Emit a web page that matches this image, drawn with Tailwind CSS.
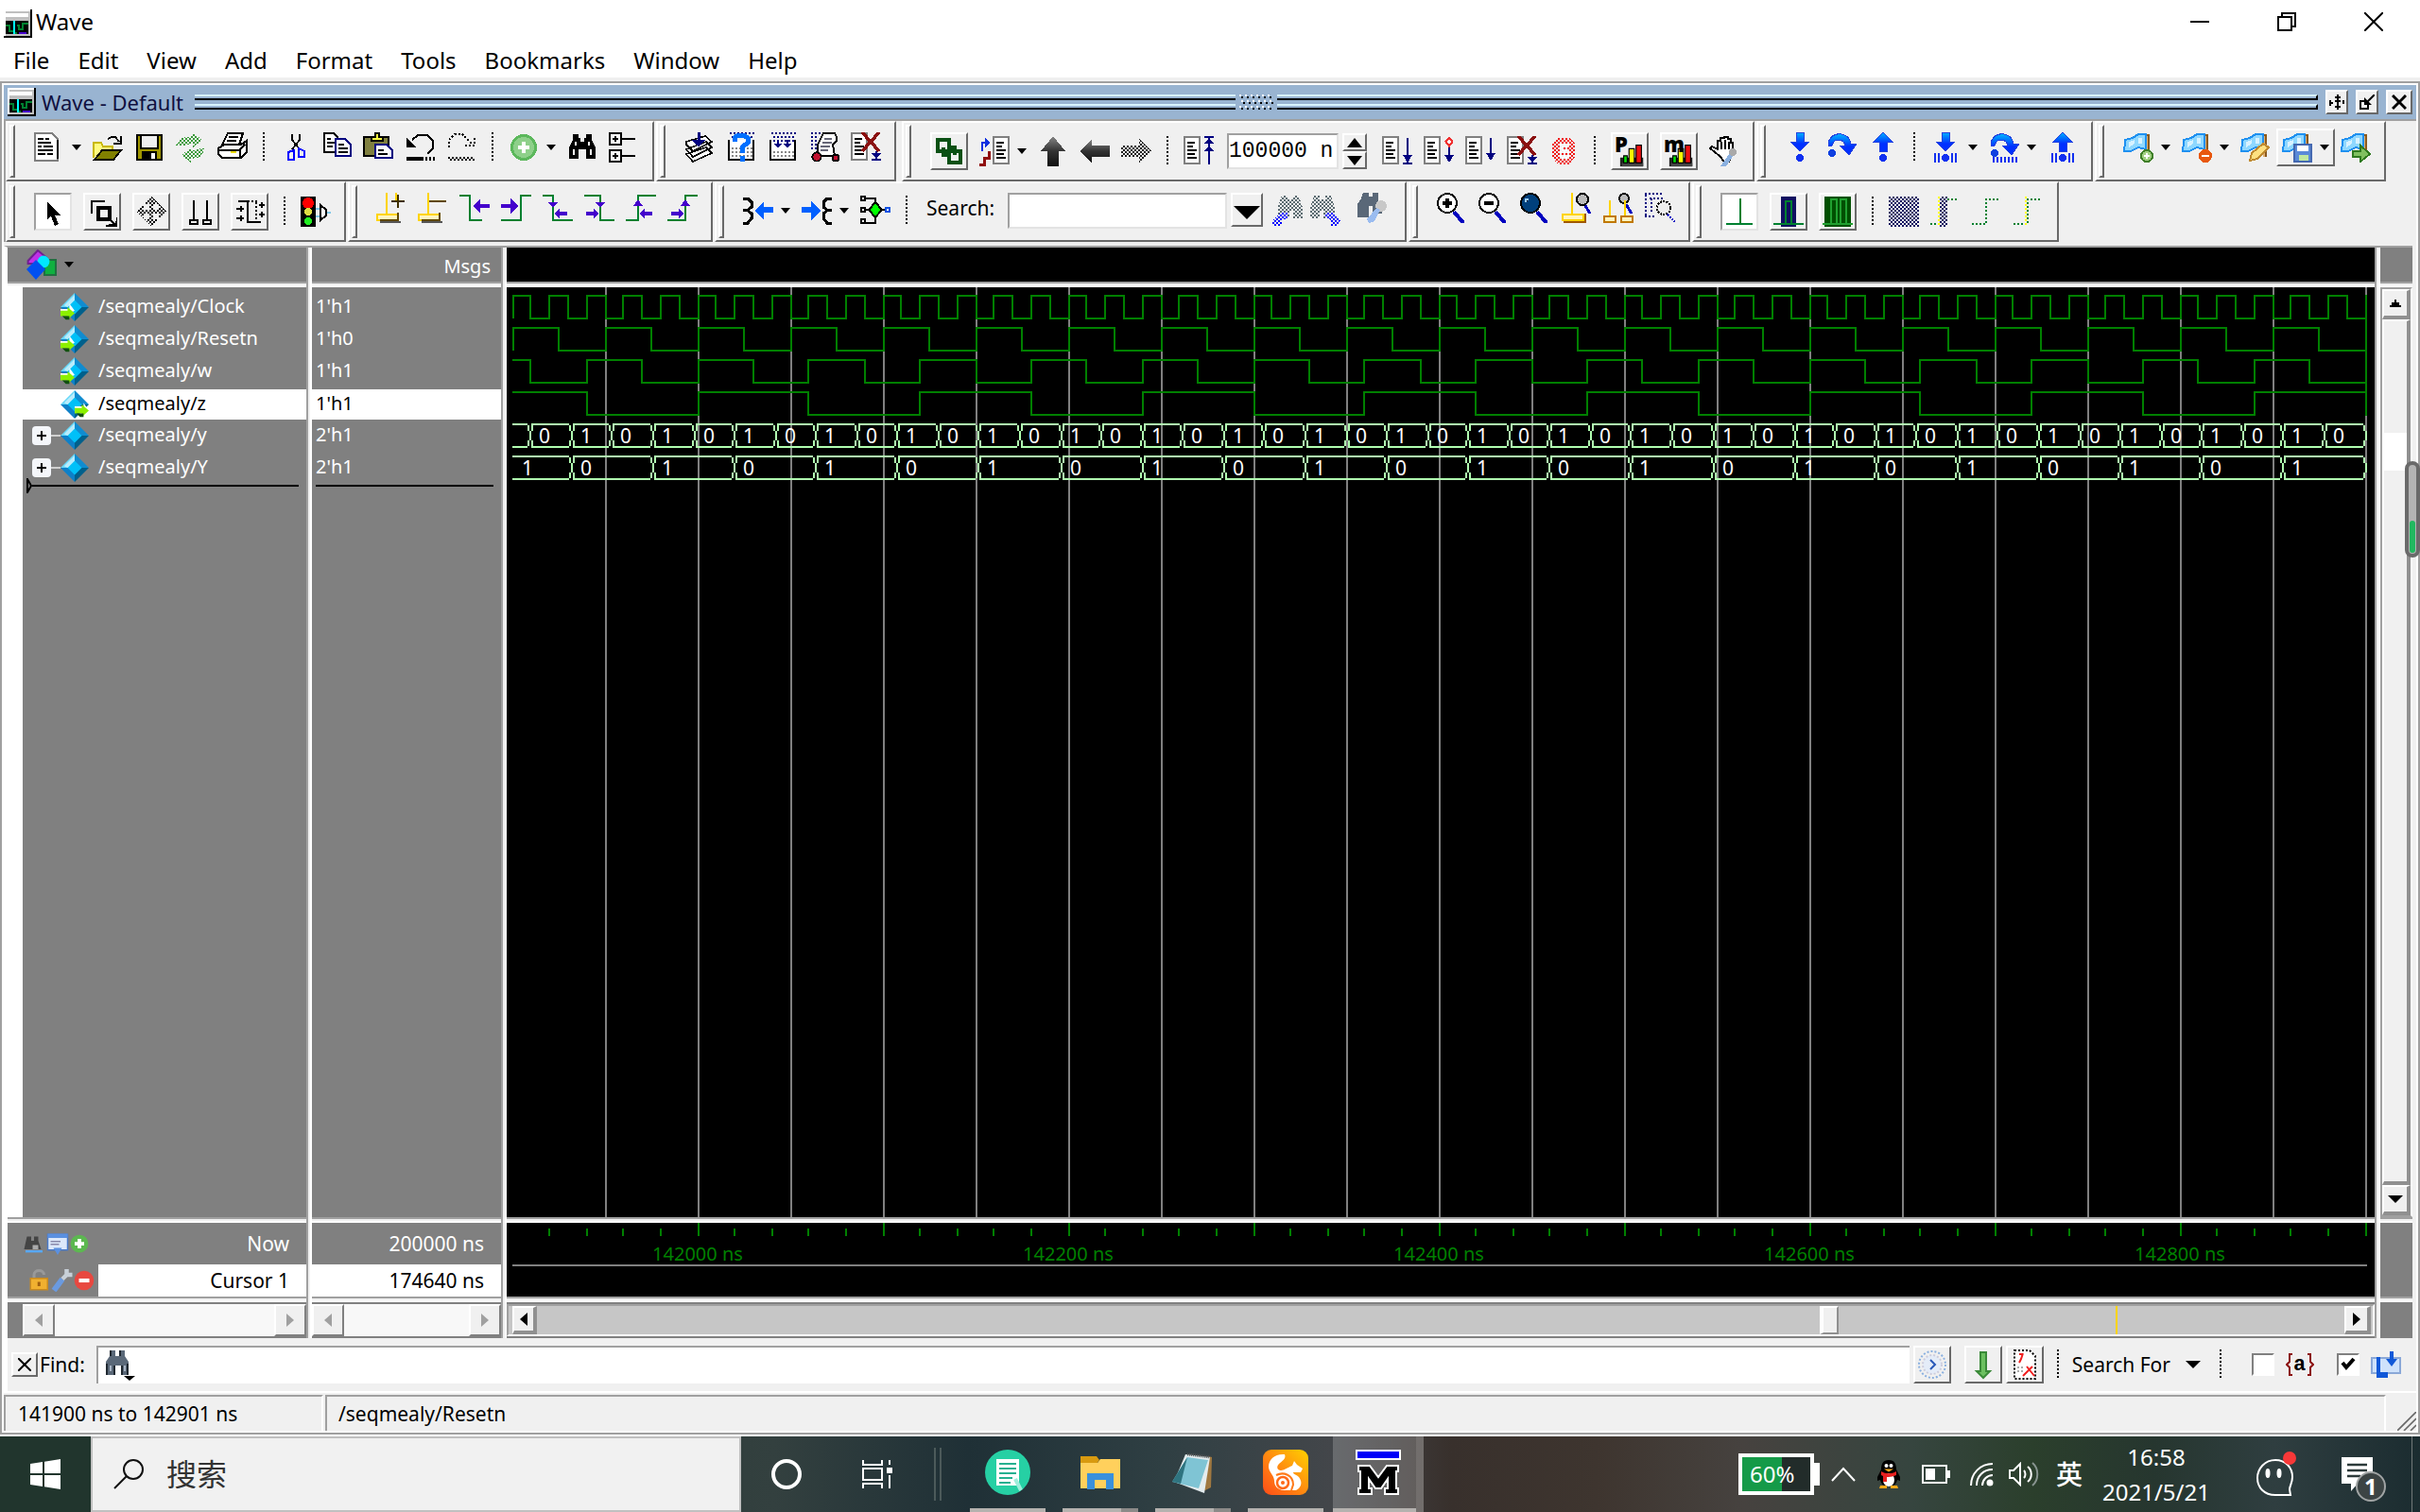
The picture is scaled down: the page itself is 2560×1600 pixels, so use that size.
<!DOCTYPE html>
<html lang="en">
<head>
<meta charset="utf-8">
<title>Wave</title>
<script src="https://cdn.jsdelivr.net/npm/@tailwindcss/browser@4"></script>
</head>
<body class="flex h-screen flex-col overflow-hidden bg-white font-['Noto_Sans','Noto_Sans_CJK_SC',sans-serif] text-[21px] leading-7 text-black">

<svg class="absolute size-0" aria-hidden="true">
  <defs>
    <pattern id="chk" width="2" height="2" patternUnits="userSpaceOnUse"><path fill="#fff" d="M0 0h1v1H0zM1 1h1v1H1z"/></pattern>
    <mask id="dim" maskUnits="userSpaceOnUse" x="0" y="0" width="16" height="16"><rect width="16" height="16" fill="url(#chk)"/></mask>
    <linearGradient id="dark" x2="0" y2="1"><stop stop-color="#888"/><stop offset=".5" stop-color="#333"/><stop offset="1" stop-color="#111"/></linearGradient>
    <linearGradient id="blue" x2="0" y2="1"><stop stop-color="#00b4ff"/><stop offset=".6" stop-color="#0030ff"/></linearGradient>
    <g id="page"><path fill="#fff" stroke="#808080" d="M.5.5h8v14h-8z"/><path stroke="#000" d="M2 3.500h4M2 5.500h3M2 7.500h5M2 9.500h4M2 11.500h5"/></g>
    <g id="flag"><path stroke="#8a5a20" stroke-width="2" d="M13 1v12"/><path stroke="#e0b070" d="M12.500 2v11"/><path fill="#8fd8ff" stroke="#1e90f0" d="M1 4l4-1 3-2h4v8l-4-1-4 2H.6z"/><path fill="#d8f2ff" d="M3 5l3-1v2L3 8zM8 3h2v3H8z"/></g>
    <g id="lens"><circle cx="5.500" cy="5.500" r="5" fill="#fff" stroke="#000"/><path stroke="#0000c0" stroke-width="2" d="M9 10l5 6"/></g>
    <g id="binoc"><path d="M3 1h3v2h1v2h2V3h1V1h3v3l2 4v6h-5V9H6v5H1V8l2-4z"/></g>
  </defs>
  <symbol id="i-app" viewBox="0 0 15 15"><path fill="#c0c0c0" d="M0 0h15v15H0z"/><path fill="#fff" d="M0 0h14v1H0zM0 0h1v14H0zM1 2h12v2H1z"/><path fill="#000" d="M1 6h12v7H1zM14 0h1v15H0v-1h14z"/><path fill="none" stroke="#008030" d="M1 8.500h2v3h2M7 8.500h1v2h2v-3h3M6 12.500h1"/><path stroke="#0ff" d="M5.500 6v7"/><path stroke="#40c" d="M8 12.500h4"/></symbol>
  <symbol id="i-new" viewBox="0 0 16 16"><path fill="#fff" stroke="#808080" d="M.5.5h9l3 3v11.500h-12z"/><path stroke="#000" d="M2 3.500h3M6 3.500h2M2 5.500h7M2 7.500h2M5 7.500h5M2 9.500h8M2 11.500h4M7 11.500h3M12.500 4v10"/></symbol>
  <symbol id="i-open" viewBox="0 0 16 16"><path fill="#fffb80" stroke="#c8b800" d="M.5 13.500v-8h4l1 2h5v2"/><path fill="#808000" stroke="#000" d="M1 14.500l4-5h10l-4 5z"/><path fill="none" stroke="#000" d="M8 3.500l2-1h2l2 2.500M15 2v4h-4"/></symbol>
  <symbol id="i-save" viewBox="0 0 16 16"><path fill="#a09600" stroke="#000" d="M1.500 1.500h13v13h-13z"/><path fill="#efefef" stroke="#000" d="M3.500 1.500h9v7h-9z"/><path fill="#000" d="M4 10h8v4H4z"/><path fill="#fff" d="M9 11h2v3h-2z"/></symbol>
  <symbol id="i-refresh" viewBox="0 0 16 16"><g mask="url(#dim)" fill="#3a9a3a"><path d="M0 7l3-4 6-1V0l5 4-5 4V6L5 7zM16 8l-3 5-5 1v2l-5-4 5-4v2l3-1z"/></g></symbol>
  <symbol id="i-print" viewBox="0 0 16 16"><path fill="#fff" stroke="#000" d="M5.500.5h8l-2 6h-9zM.5 8.500l3-2h9l3-2v6l-3 3h-10l-2-2z"/><path fill="none" stroke="#000" d="M6 2.500h5M5 4.500h5M.5 9.500h11l3-3M12 9v4"/><path stroke="#e8d800" d="M7 10.500h3"/></symbol>
  <symbol id="i-cut" viewBox="0 0 16 16"><path fill="none" stroke="#000" d="M6.500 1v3l4 5M10.500 1v3l-4 5"/><path fill="none" stroke="#00f" d="M7.500 9.500l-3 1v4h3zM10 8.500v4.500h3v-3l-2-1z"/></symbol>
  <symbol id="i-copy" viewBox="0 0 16 16"><path fill="#fff" stroke="#000" d="M1.500.5h5l2 2v8h-7z"/><path fill="#fff" stroke="#000080" d="M7.500 3.500h5l3 3v6h-8z"/><path stroke="#000" d="M3 3.500h2M3 5.500h4M3 7.500h3M9 6.500h3M9 8.500h5M9 10.500h5"/></symbol>
  <symbol id="i-paste" viewBox="0 0 16 16"><path fill="#808040" stroke="#000" d="M.5 2.500h13v10H.5z"/><path fill="#ffff40" stroke="#000" d="M4.500 4.500v-2h2v-2h2v2h2v2z"/><path fill="#fff" stroke="#000080" d="M6.500 6.500h6l3 3v4h-9z"/><path stroke="#000" d="M8 9.500h3M8 11.500h5"/></symbol>
  <symbol id="i-undo" viewBox="0 0 16 16"><path fill="none" stroke="#000" d="M4 4l3-2.500h5l3 3v4l-3 3"/><path d="M1 3v5h5zM1 13h9v2H1zM11 13h1v2h-1zM13 13h1v2h-1zM15 13h1v2h-1z"/></symbol>
  <symbol id="i-redo" viewBox="0 0 16 16"><g fill="none" stroke="#000" stroke-dasharray="1 1"><path d="M1.500 8V4l3-3h4l5 5M15 3v4h-5M1 13.500h14M2 14.500h14"/></g></symbol>
  <symbol id="i-add" viewBox="0 0 16 16"><circle cx="8" cy="8" r="7" fill="#5cb85c"/><circle cx="8" cy="8" r="5.500" fill="#8ed08a"/><path fill="#fff" d="M7 5h2v2h2v2H9v2H7V9H5V7h2z"/></symbol>
  <symbol id="i-find" viewBox="0 0 16 16"><use href="#binoc"/><path stroke="#fff" d="M4.500 5v2M11.500 5v2M3.500 9v3M12.500 9v3"/></symbol>
  <symbol id="i-tree" viewBox="0 0 16 16"><path fill="#fff" stroke="#000" d="M.5.5h6v6h-6zM.5 9.500h6v6h-6z"/><path stroke="#000" d="M2 3.500h3M3.500 2v3M2 12.500h3M3.500 11v3M7 3.500h7M7 12.500h7"/></symbol>
  <symbol id="i-stack" viewBox="0 0 16 16"><path fill="#fff" stroke="#000" stroke-width=".8" d="M1 11.500l3.500 4 10-4.500-3-3zM1 9l3.500 4 10-5-3-3zM1 6.500L4.500 10l10-5L11 2 1 5z"/><path stroke="#000080" stroke-width="1.500" d="M7.500 0v6"/><path fill="#000080" d="M4 4h7L7.500 8z"/></symbol>
  <symbol id="i-help" viewBox="0 0 16 16"><path fill="#fff" stroke="#000" d="M1.500 4v10.500h13V4"/><path stroke="#000080" stroke-dasharray="1 1" d="M2 .5h13M3 2.500h12"/><path stroke="#888" stroke-dasharray="1 1" d="M3 8.500h11M3 10.500h11M3 12.500h11"/><path fill="none" stroke="#0070ff" stroke-width="2.500" d="M4.500 5V3l2-1.500h3L11.500 3v2.500L8.500 8v3M8.500 12.500v3"/></symbol>
  <symbol id="i-comp" viewBox="0 0 16 16"><path fill="#fff" stroke="#000" d="M1.500 4v10.500h13V4"/><path stroke="#000080" stroke-dasharray="1 1" d="M2 .5h13M3 2.500h12M3 4.500h12"/><path stroke="#888" stroke-dasharray="1 1" d="M3 10.500h11M3 12.500h11"/><path fill="#000080" d="M5 4h1v2h1.500L5.500 8.500 3.500 6H5zM10 4h1v2h1.500l-2 2.500-2-2.500H10z"/></symbol>
  <symbol id="i-sim" viewBox="0 0 16 16"><path stroke="#000080" stroke-dasharray="1 1" d="M1 .5h5M1 2.500h4M1 4.500h4M1 6.500h4M1 8.500h3"/><path fill="#fff" stroke="#000" d="M4.500 12.500v-6l3-6h6l1 2v2l-2 2 1 6z"/><path stroke="#667" d="M8 3.500h4M7 5.500h5M6 7.500h5M6 9.500h4"/><circle cx="4" cy="13" r="2.300" fill="#c01030" stroke="#000"/><circle cx="14" cy="13.500" r="1.700" fill="#c01030" stroke="#000"/></symbol>
  <symbol id="i-docx" viewBox="0 0 16 16"><use href="#page"/><path stroke="#8b1010" stroke-width="1.800" d="M6 0l9 10M15 0L6 10"/><path stroke="#000080" d="M13.500 10v4M11 14.500h5"/><path fill="#000080" d="M11 11h5l-2.500 3z"/></symbol>
  <symbol id="i-link" viewBox="0 0 16 16"><path fill="none" stroke="#0a5014" stroke-width="2" d="M2 2h6v6H2zM8 8h6v6H8zM5 6v4h4M11 10V6H8"/></symbol>
  <symbol id="i-goto" viewBox="0 0 16 16"><path fill="none" stroke="#1030e0" d="M1.500 8V3.500h3"/><path fill="#1030e0" d="M3 1l3 2.500L3 6z"/><path fill="none" stroke="#901010" stroke-width="1.500" d="M0 15h2.500v-3.500H5V8"/><use href="#page" x="7"/></symbol>
  <symbol id="i-up" viewBox="0 0 16 16"><path fill="url(#dark)" d="M8 0l6.500 8H11v8H5V8H1.500z"/></symbol>
  <symbol id="i-left" viewBox="0 0 16 16"><path fill="url(#dark)" d="M0 8l6.500-6.500V5H16v6H6.500v3.500z"/></symbol>
  <symbol id="i-right" viewBox="0 0 16 16"><path mask="url(#dim)" fill="#222" d="M16 8L9.500 1.500V5H0v6h9.500v3.500z"/></symbol>
  <symbol id="i-doc-up" viewBox="0 0 16 16"><use href="#page"/><path stroke="#000080" d="M13.500 1v14M11 .5h5"/><path fill="#000080" d="M11 4l2.500-3L16 4zM11 8l2.500-3L16 8z"/></symbol>
  <symbol id="i-doc-dn" viewBox="0 0 16 16"><use href="#page"/><path stroke="#000080" d="M13.500 1v13M11 14.500h5"/><path fill="#000080" d="M11 10h5l-2.500 4z"/></symbol>
  <symbol id="i-doc-dia" viewBox="0 0 16 16"><use href="#page"/><path stroke="#000080" d="M13.500 6v7"/><path fill="#000080" d="M11 10h5l-2.500 4z"/><path fill="#fff" stroke="#f03030" d="M13.500.8L15.300 3l-1.800 2.300L11.700 3z"/></symbol>
  <symbol id="i-doc-dn2" viewBox="0 0 16 16"><use href="#page"/><path stroke="#000080" d="M13.500 1v9"/><path fill="#000080" d="M11 9h5l-2.500 4z"/></symbol>
  <symbol id="i-stop" viewBox="0 0 16 16"><g mask="url(#dim)"><path fill="#f01818" d="M5 1h6l3 3v7l-3 4H5l-3-4V4z"/><path fill="#fff" d="M6 4h5v2H7v1h4v2H7v1h4v2H6z"/></g></symbol>
  <symbol id="i-prof" viewBox="0 0 16 16"><path fill="#222" d="M1 10h13v5H1z"/><path fill="#444" d="M2 13h12v2H2z"/><path fill="#00e000" stroke="#000" stroke-width=".6" d="M3 9h2v4H3z"/><path fill="#ff0" stroke="#000" stroke-width=".6" d="M6 5h3v8H6z"/><path fill="#f01010" stroke="#000" stroke-width=".6" d="M10 3h3v10h-3z"/></symbol>
  <symbol id="i-hand" viewBox="0 0 16 16"><path fill="#fff" stroke="#000" d="M5.500 10.500l-5-4 1-1 3 1.500V2.500H6V1h2V.5h2v1h1.500v2h1v6l-2 4H8z"/><path stroke="#000" d="M6.500 3v4M8.500 2v5M10.500 3v4"/><path fill="#8ab0e0" d="M6 16l5-7 2 1-4 6z"/><circle cx="12.500" cy="8.500" r="2" fill="#aaa"/></symbol>
  <symbol id="i-into" viewBox="0 0 16 16"><path fill="url(#blue)" stroke="#2040e0" stroke-width=".5" d="M6 0h4v5h3l-5 5-5-5h3z"/><circle cx="8" cy="13.500" r="2" fill="#1030f0"/></symbol>
  <symbol id="i-over" viewBox="0 0 16 16"><path fill="url(#blue)" stroke="#2040e0" stroke-width=".5" d="M1 7c0-8 11-8 12-1h3l-4 6-5-5h3C9 3 4 3 3 7z"/><circle cx="3" cy="11" r="2" fill="#1040e0"/></symbol>
  <symbol id="i-out" viewBox="0 0 16 16"><path fill="url(#blue)" stroke="#2040e0" stroke-width=".5" d="M8 0l5 5h-3v5H6V5H3z"/><circle cx="8" cy="13.500" r="2" fill="#1030f0"/></symbol>
  <symbol id="i-into2" viewBox="0 0 16 16"><use href="#i-into"/><path stroke="#1030f0" d="M2.500 11v5M4.500 11v5M11.500 11v5M13.500 11v5"/></symbol>
  <symbol id="i-over2" viewBox="0 0 16 16"><use href="#i-over"/><path stroke="#1030f0" stroke-width="3" stroke-dasharray="1 1" d="M2 14.500h14"/></symbol>
  <symbol id="i-out2" viewBox="0 0 16 16"><use href="#i-out"/><path stroke="#1030f0" d="M2.500 11v5M4.500 11v5M11.500 11v5M13.500 11v5"/></symbol>
  <symbol id="i-bm-add" viewBox="0 0 16 16"><use href="#flag"/><circle cx="12.500" cy="12.500" r="3" fill="#a0d080" stroke="#40802a"/><path stroke="#fff" d="M11 12.500h3M12.500 11v3"/></symbol>
  <symbol id="i-bm-del" viewBox="0 0 16 16"><use href="#flag"/><circle cx="12.500" cy="12.500" r="3.500" fill="#e85810"/><path stroke="#fff" d="M10.500 12.500h4"/></symbol>
  <symbol id="i-bm-edit" viewBox="0 0 16 16"><use href="#flag"/><path fill="#ffe080" stroke="#c08a30" d="M5 15l1-4 6-5 3 2-6 6z"/></symbol>
  <symbol id="i-bm-save" viewBox="0 0 16 16"><use href="#flag"/><path fill="#5a8ad8" stroke="#4468b0" d="M6.500 6.500h9v9h-9z"/><path fill="#fff" d="M8 7h6v3H8z"/><path fill="#c0e8a0" d="M9 12h5v3H9z"/></symbol>
  <symbol id="i-bm-go" viewBox="0 0 16 16"><use href="#flag"/><path fill="#80c060" stroke="#307a20" d="M6.500 10h4V7l5 4.500-5 4v-2.500h-4z"/></symbol>
  <symbol id="i-arrow" viewBox="0 0 16 16"><path d="M5 3v9l2-1.500 2 5 2-1-2-4.500h3z"/></symbol>
  <symbol id="i-zoomsel" viewBox="0 0 16 16"><path fill="none" stroke="#000" d="M2.500 9V2.500h7"/><path fill="none" stroke="#000" stroke-width="2" d="M6 6h6v6H6z"/><path stroke="#000" d="M12 12l3 3"/><path d="M16 10v6h-6v-1l5-1z"/></symbol>
  <symbol id="i-pan" viewBox="0 0 16 16"><g mask="url(#dim)"><path d="M8 0l4 4H9v3h3V4l4 4-4 4V9H9v3h3l-4 4-4-4h3V9H4v3L0 8l4-4v3h3V4H4z"/></g></symbol>
  <symbol id="i-two" viewBox="0 0 16 16"><path fill="none" stroke="#000" d="M4.500 2v10M11.500 2v10M2.500 12.500h4v2h-4zM9.500 12.500h4v2h-4z"/></symbol>
  <symbol id="i-edit" viewBox="0 0 16 16"><path fill="none" stroke="#000" d="M2 2.500h5v11h7"/><path fill="none" stroke="#000" stroke-dasharray="1 1" d="M7 2.500h5M11.500 3v10"/><path stroke="#000" d="M1 6.500h4M1 11.500h4M3.500 5v3M3.500 10v3M13 4.500h3M13 9.500h3M14.500 3v3M14.500 8v3"/></symbol>
  <symbol id="i-light" viewBox="0 0 16 16"><path d="M0 0h8v16H0z"/><circle cx="4" cy="3.500" r="3" fill="#f00"/><circle cx="4" cy="8" r="2" fill="#dd4"/><circle cx="4" cy="13" r="2" fill="#2e2"/><path stroke="#80c8e8" d="M8 6.500h3M8 10.500h3M14 8.500h2"/><path fill="#fff" stroke="#000" d="M10.500 4.500l3 2.500v3l-3 2.500z"/></symbol>
  <symbol id="i-cur-add" viewBox="0 0 16 16"><path stroke="#ffd400" stroke-width="1.200" d="M5.500 0v11M10.500 0v4"/><path stroke="#403000" d="M8 4.500h7M11.500 1v7"/><path stroke="#555" d="M2 15.500h11"/><path fill="#fff5c0" stroke="#ffd400" d="M.5 11.500h11v3H.5z"/><path stroke="#604800" fill="none" d="M2 14.500h9.500v-4"/></symbol>
  <symbol id="i-cur-del" viewBox="0 0 16 16"><path stroke="#ffd400" stroke-width="1.200" d="M5.500 0v11"/><path stroke="#604800" d="M6 4.500h9"/><path stroke="#555" d="M2 15.500h11"/><path fill="#fff5c0" stroke="#ffd400" d="M.5 11.500h11v3H.5z"/><path stroke="#604800" fill="none" d="M2 14.500h9.500v-4"/></symbol>
  <symbol id="i-e1" viewBox="0 0 16 16"><path fill="none" stroke="#008030" d="M0 1.500h5.500v13H12"/><path fill="#40c" d="M7 7l4-4v3h5v2h-5v3z"/></symbol>
  <symbol id="i-e2" viewBox="0 0 16 16"><path fill="none" stroke="#008030" d="M0 14.500h10.500v-13H16"/><path fill="#40c" d="M9 7L5 3v3H0v2h5v3z"/></symbol>
  <symbol id="i-e3" viewBox="0 0 16 16"><path fill="none" stroke="#008030" d="M0 1.500h5.500v13H16"/><path fill="#40c" d="M3 5h5L5.500 8zM6 11l3-2.500V10h4v2H9v1.500z"/></symbol>
  <symbol id="i-e4" viewBox="0 0 16 16"><path fill="none" stroke="#008030" d="M0 1.500h8.500v13H16"/><path fill="#40c" d="M6 5h5L8.500 8zM8 11L5 8.500V10H1v2h4v1.500z"/></symbol>
  <symbol id="i-e5" viewBox="0 0 16 16"><path fill="none" stroke="#008030" d="M0 14.500h6.500v-13H16"/><path fill="#40c" d="M4 7h5L6.500 3.500zM7 11l3-2.500V10h4v2h-4v1.500z"/></symbol>
  <symbol id="i-e6" viewBox="0 0 16 16"><path fill="none" stroke="#008030" d="M0 14.500h9.500v-13H16"/><path fill="#40c" d="M7 7h5L9.500 3.500zM9 11L6 8.500V10H2v2h4v1.500z"/></symbol>
  <symbol id="i-join" viewBox="0 0 16 16"><path fill="none" stroke="#000" stroke-width="1.500" d="M0 1.500h2.500l2 2V6l-2 1.700H0h2.500l2 1.800V12l-2 2.500H0"/><path fill="#0060ff" d="M6 8l5-5v3h5v3h-5v4z"/></symbol>
  <symbol id="i-split" viewBox="0 0 16 16"><path fill="none" stroke="#000" stroke-width="1.500" d="M16 1.500h-2.500l-2 2V6l2 1.700H16h-2.500l-2 1.800V12l2 2.500H16"/><path fill="#0060ff" d="M10 8L5 3v3H0v3h5v4z"/></symbol>
  <symbol id="i-net" viewBox="0 0 16 16"><path fill="none" stroke="#000" d="M2 1.500h6v13H2M0 7.500h14"/><path fill="#fff" stroke="#000" d="M.5.5h2v2h-2zM.5 6.500h2v2h-2zM.5 12.500h2v2h-2z"/><path fill="#fff" stroke="#1050e0" d="M13.500 6.500h2v2h-2z"/><path fill="#0f0" stroke="#000" d="M8 3.500L11.500 7.500 8 11.500 4.500 7.500z"/></symbol>
  <symbol id="i-fprev" viewBox="0 0 16 16"><g mask="url(#dim)"><path fill="#5a6a70" d="M5 0h3v2h3V0h3l2 6v6h-5V8H9v4H3V6z"/><path fill="#00f" d="M0 13l4-4h4v3l-3 1v3H0z"/></g></symbol>
  <symbol id="i-fnext" viewBox="0 0 16 16"><g mask="url(#dim)"><path fill="#5a6a70" d="M2 0h3v2h3V0h3l2 6v6H7V8H5v4H0V6z"/><path fill="#00f" d="M16 13l-4-4H8v3l3 1v3h4z"/></g></symbol>
  <symbol id="i-fopt" viewBox="0 0 16 16"><path fill="#5a6878" d="M3 0h3v2h2V0h3v4l2 3v4H8V7H6v6H0V6l2-3z"/><circle cx="12.500" cy="7" r="3" fill="#c8c8c8"/><path fill="#9abcf0" d="M5 14l5-6 2 1-3 6-3 1z"/></symbol>
  <symbol id="i-zin" viewBox="0 0 16 16"><use href="#lens"/><path stroke="#000" stroke-width="2" d="M3 5.500h5M5.500 3v5"/></symbol>
  <symbol id="i-zout" viewBox="0 0 16 16"><use href="#lens"/><path stroke="#000" stroke-width="2" d="M3 5.500h5"/></symbol>
  <symbol id="i-zfull" viewBox="0 0 16 16"><use href="#lens"/><circle cx="5.500" cy="5.500" r="5" fill="#00407c" stroke="#000"/><path stroke="#9cf" d="M3 5V3.500h1.500"/></symbol>
  <symbol id="i-zcur" viewBox="0 0 16 16"><path stroke="#0000c0" stroke-width="1.500" d="M12 6l3 5"/><circle cx="11" cy="3.500" r="3" fill="#bbb" stroke="#000"/><path stroke="#ffd400" d="M5.500 0v11"/><path fill="#fff5c0" stroke="#ffd400" d="M.5 11.500h11v3H.5z"/><path stroke="#a05800" fill="none" d="M1 15.500h11.500V11"/></symbol>
  <symbol id="i-z2cur" viewBox="0 0 16 16"><path stroke="#0000c0" stroke-width="1.500" d="M12 6l3 5"/><circle cx="11" cy="3" r="2.500" fill="#bbb" stroke="#000"/><path stroke="#ffd400" d="M3.500 4v8M11.500 4v8"/><path fill="#fff5c0" stroke="#c07800" d="M.5 12.500h6v3h-6zM9.500 12.500h6v3h-6z"/></symbol>
  <symbol id="i-zarea" viewBox="0 0 16 16"><path fill="none" stroke="#000080" stroke-dasharray="1 1" d="M0 .5h9M.5 1v11M0 12.500h5M2.500 3h8M3.500 3v8"/><circle cx="10" cy="8" r="3.500" fill="#eee" stroke="#000" stroke-dasharray="1 .6"/><path stroke="#0000c0" stroke-dasharray="1 .6" d="M12 11.500l4 4"/></symbol>
  <symbol id="i-w1" viewBox="0 0 16 16"><path stroke="#008030" d="M8.500 1v13M1 14.500h14"/></symbol>
  <symbol id="i-w2" viewBox="0 0 16 16"><path fill="#101060" d="M4 0h8v16H4z"/><path fill="none" stroke="#008030" d="M6.500 14V2.500h3V14M0 14.500h16"/></symbol>
  <symbol id="i-w3" viewBox="0 0 16 16"><path fill="#005000" d="M1 0h14v16H1z"/><path fill="none" stroke="#20a030" d="M4.500 14V1.500h3V14M9.500 14V1.500h3V14M0 14.500h16"/></symbol>
  <symbol id="i-w4" viewBox="0 0 16 16"><path mask="url(#dim)" fill="#101060" d="M0 0h16v16H0z"/></symbol>
  <symbol id="i-w5" viewBox="0 0 16 16"><path mask="url(#dim)" fill="#101060" d="M5 0h4v16H5z"/><path fill="none" stroke="#008030" stroke-dasharray="1 1" d="M0 14.500h4M9 1.500h6"/><path stroke="#ff0" stroke-dasharray="1 1" d="M4.500 0v16"/></symbol>
  <symbol id="i-w6" viewBox="0 0 16 16"><path fill="none" stroke="#008030" stroke-dasharray="1 1" d="M0 14.500h7.500V1.500H15"/></symbol>
  <symbol id="i-w7" viewBox="0 0 16 16"><path fill="none" stroke="#008030" stroke-dasharray="1 1" d="M0 14.500h7.500V1.500H15"/><path stroke="#ff0" stroke-dasharray="1 1" d="M6.500 0v16"/></symbol>
  <symbol id="i-gem" viewBox="0 0 16 16"><path fill="#68d8f8" d="M8 0v8H0z"/><path fill="#108cd0" d="M8 0l8 8H8z"/><path fill="#0e80c8" d="M0 8h8v8z"/><path fill="#00608c" d="M16 8H8v8z"/><path fill="#00c0f8" d="M8 4l4 4-4 4-4-4z"/><path fill="#b8ecfc" d="M8 1L2 7l2 1 4-4z"/></symbol>
  <symbol id="i-gem-in" viewBox="0 0 16 16"><use href="#i-gem"/><path fill="#fff" d="M0 9h5V6l3 4-2 1H0z"/><path fill="#8cf000" d="M0 10h4V8l4 3.500L4 15v-2H0z"/><path fill="#105010" d="M1 13h4v2H3z"/></symbol>
  <symbol id="i-gem-out" viewBox="0 0 16 16"><use href="#i-gem"/><path fill="#fff" d="M8 9h5V7l2 3-2 1H8z"/><path fill="#8cf000" d="M8 10h4V8l4 3.500-4 3.500v-2H8z"/><path fill="#105010" d="M9 13h4v2h-2z"/></symbol>
</svg>

<!-- Window title -->
<header class="flex h-[46px] items-center pl-1 pr-[3px]">
  <svg class="mt-1 size-[30px]" shape-rendering="crispEdges"><use href="#i-app"/></svg>
  <h1 class="ml-1 text-2xl">Wave</h1>
  <div class="ml-auto flex h-full">
    <button class="flex w-[92px] items-center justify-center" aria-label="Minimize"><svg class="size-5" viewBox="0 0 20 20"><path stroke="#000" stroke-width="2" d="M0 10h20"/></svg></button>
    <button class="flex w-[92px] items-center justify-center" aria-label="Restore"><svg class="size-5" viewBox="0 0 20 20" fill="none" stroke="#000" stroke-width="2"><path d="M1 5h14v14H1zM5 5V1h14v14h-4"/></svg></button>
    <button class="flex w-[92px] items-center justify-center" aria-label="Close"><svg class="size-5" viewBox="0 0 20 20"><path stroke="#000" stroke-width="2" d="M0 0l20 20M20 0L0 20"/></svg></button>
  </div>
</header>
<nav class="flex h-9 items-center gap-[30px] pl-[14px] text-2xl">
  <button>File</button><button>Edit</button><button>View</button><button>Add</button><button>Format</button><button>Tools</button><button>Bookmarks</button><button>Window</button><button>Help</button>
</nav>

<div class="flex min-h-0 flex-1 flex-col border-t-4 border-[#f0f0f0] bg-[#f0f0f0]">
<div class="flex min-h-0 flex-1 flex-col border-2 border-[#a0a0a0]">
<div class="flex min-h-0 flex-1 flex-col border-2 border-white">

  <!-- Pane title -->
  <div class="flex h-9 shrink-0 items-center bg-[#99b4d1] pl-1 pr-1">
    <svg class="size-[30px]" shape-rendering="crispEdges"><use href="#i-app"/></svg>
    <h2 class="ml-1.5 mr-3 text-[22px] text-[#101040]">Wave - Default</h2>
    <div class="flex flex-1 flex-col gap-1"><div class="h-1.5 border-b-2 border-t-2 border-b-black border-t-[#d8f4ff]"></div><div class="h-1.5 border-b-2 border-t-2 border-b-black border-t-[#d8f4ff]"></div></div>
    <svg class="mx-1 h-4 w-9" viewBox="0 0 18 8" shape-rendering="crispEdges"><g stroke-dasharray="1 2"><path stroke="#fff" d="M0 .5h18M1 3.500h17M0 6.500h18"/><path stroke="#000" d="M1 1.500h17M2 4.500h16M1 7.500h17"/></g></svg>
    <div class="flex flex-1 flex-col gap-1"><div class="h-1.5 border-b-2 border-r-2 border-t-2 border-b-black border-r-black border-t-[#d8f4ff]"></div><div class="h-1.5 border-b-2 border-r-2 border-t-2 border-b-black border-r-black border-t-[#d8f4ff]"></div></div>
    <div class="ml-2 flex gap-2">
      <button aria-label="Zoom pane" class="flex h-[26px] w-6 items-center justify-center border-2 border-b-[#696969] border-l-white border-r-[#696969] border-t-white bg-[#f0f0f0]"><svg class="size-4" viewBox="0 0 8 8" shape-rendering="crispEdges"><path d="M3 1h1V0h1v1h1v1H5v1h1v1h1V3h1v2H7V4H5v2h1v1H5v1H4V7H3V6h1V4H2v1H1v1H0V3h1v1h2V3h1V2H3z"/></svg></button>
      <button aria-label="Undock" class="flex h-[26px] w-6 items-center justify-center border-2 border-b-[#696969] border-l-white border-r-[#696969] border-t-white bg-[#f0f0f0]"><svg class="size-4" viewBox="0 0 8 8"><path fill="none" stroke="#000" d="M2.500 3.500h-2v4h4v-2M8 0L4 4"/><path d="M2.500 1.500v4h4z"/></svg></button>
      <button aria-label="Close pane" class="flex h-[26px] w-7 items-center justify-center border-2 border-b-[#696969] border-l-white border-r-[#696969] border-t-white bg-[#f0f0f0]"><svg class="size-4" viewBox="0 0 16 16"><path stroke="#000" stroke-width="3" d="M1 1l14 14M15 1L1 15"/></svg></button>
    </div>
  </div>

  <!-- Toolbars -->
  <div class="shrink-0 border-l-2 border-t-2 border-[#a0a0a0]">
    <div id="bars1" class="flex gap-0.5"></div>
    <div id="bars2" class="flex gap-0.5"></div>
  </div>

  <!-- Wave panes -->
  <main class="mr-1 mt-1 flex min-h-0 flex-1 border-l-4 border-t-2 border-l-white border-t-[#a0a0a0]">
    <section class="flex w-[316px] flex-col">
      <div class="flex h-9 shrink-0 items-center gap-2 bg-[#808080] pl-5">
        <svg class="h-8 w-8" viewBox="0 0 16 16"><path fill="#c030e8" stroke="#702090" d="M6 .5L.8 6v1.500h6l4-3z"/><path fill="#10b040" stroke="#207040" d="M9.500 5.500h6v8h-6z"/><circle cx="9" cy="6.500" r="3.200" fill="#00e8ff"/><path fill="#0050f0" d="M5 5.500l5 5-5 5.500-5-5.500z"/></svg>
        <button aria-label="Signal filter"><svg class="h-1.5 w-2.5" viewBox="0 0 10 6"><path d="M0 0h10L5 6z"/></svg></button>
      </div>
      <div class="h-1.5 shrink-0 border-b-2 border-t-2 border-b-white border-t-[#a0a0a0]"></div>
      <ul id="names" class="min-h-0 flex-1 border-l-16 border-white bg-[#808080] pt-1 text-[20px] text-white"></ul>
      <div class="h-1.5 shrink-0 border-b-2 border-t-2 border-b-white border-t-[#a0a0a0]"></div>
      <div class="flex h-11 shrink-0 items-center gap-px bg-[#808080] pl-4 pr-[18px] text-white">
        <svg class="size-6" viewBox="0 0 16 16"><path fill="#444" d="M3 3h3v3h2V3h3v3l2 6H1z"/><path fill="#aaa" d="M7 9h4v3H7z"/><path stroke="#5af" stroke-width="1.500" d="M2 13.500h12"/></svg>
        <svg class="size-6" viewBox="0 0 16 16"><path fill="#dce8fa" stroke="#4a7ac8" d="M1 1.500h14v11H1z"/><path fill="#5a90e0" d="M1 1h14v3H1zM5 11h6l-3 5z"/><path stroke="#88a" d="M3 6.500h7M3 8.500h6"/></svg>
        <svg class="size-5" viewBox="0 0 16 16"><circle cx="8" cy="8" r="7.500" fill="#5cb850"/><path stroke="#fff" stroke-width="3" d="M4 8h8M8 4v8"/></svg>
        <span class="ml-auto">Now</span>
      </div>
      <div class="flex h-[34px] shrink-0 items-center bg-[#808080] pl-[22px]">
        <svg class="size-6" viewBox="0 0 16 16"><path fill="none" stroke="#999" stroke-width="2" d="M4 7V4c0-4 7-4 7 0"/><path fill="#f0b030" stroke="#c88a20" d="M1.500 6.500h12v8h-12z"/><path stroke="#a06010" stroke-width="2" d="M7.500 9v3"/></svg>
        <svg class="size-6" viewBox="0 0 16 16"><path stroke="#6a9ae0" stroke-width="4" d="M2 15l6-8"/><path fill="none" stroke="#c8d0d8" stroke-width="3" d="M8 7l3-3V0M11 4h4"/></svg>
        <svg class="size-[22px]" viewBox="0 0 16 16"><circle cx="8" cy="8" r="7.500" fill="#e84840"/><path stroke="#fff" stroke-width="3" d="M4 8h8"/></svg>
        <span class="ml-1 flex h-full flex-1 items-center justify-end bg-white pr-[18px]">Cursor 1</span>
      </div>
      <div class="h-1.5 shrink-0 border-b-2 border-t-2 border-b-white border-t-[#a0a0a0]"></div>
      <div class="flex h-[38px] shrink-0 bg-[#808080] py-0.5 pl-4">
        <button aria-label="Scroll names left" class="flex w-[34px] items-center justify-center border-2 border-b-[#808080] border-l-white border-r-[#808080] border-t-white bg-[#f0f0f0]"><svg class="h-3.5 w-2" viewBox="0 0 8 14"><path fill="#a0a0a0" d="M8 0v14L0 7z"/></svg></button>
        <div class="flex-1 bg-[#f8f8f8]"></div>
        <button aria-label="Scroll names right" class="flex w-[34px] items-center justify-center border-2 border-b-[#808080] border-l-white border-r-[#808080] border-t-white bg-[#f0f0f0]"><svg class="h-3.5 w-2" viewBox="0 0 8 14"><path fill="#a0a0a0" d="M0 0v14l8-7z"/></svg></button>
      </div>
    </section>
    <div class="w-1.5 shrink-0 border-l-2 border-r-2 border-l-[#a0a0a0] border-r-white"></div>

    <section class="flex w-[200px] flex-col">
      <div class="flex h-9 shrink-0 items-center justify-end bg-[#808080] pr-[11px] pt-1 text-[20px] text-white">Msgs</div>
      <div class="h-1.5 shrink-0 border-b-2 border-t-2 border-b-white border-t-[#a0a0a0]"></div>
      <ul id="values" class="min-h-0 flex-1 bg-[#808080] pt-1 text-[20px] text-white"></ul>
      <div class="h-1.5 shrink-0 border-b-2 border-t-2 border-b-white border-t-[#a0a0a0]"></div>
      <div class="flex h-11 shrink-0 items-center justify-end bg-[#808080] pr-[18px] text-white">200000 ns</div>
      <div class="flex h-[34px] shrink-0 items-center justify-end bg-white pr-[18px]">174640 ns</div>
      <div class="h-1.5 shrink-0 border-b-2 border-t-2 border-b-white border-t-[#a0a0a0]"></div>
      <div class="flex h-[38px] shrink-0 bg-[#808080] py-0.5">
        <button aria-label="Scroll values left" class="flex w-[34px] items-center justify-center border-2 border-b-[#808080] border-l-white border-r-[#808080] border-t-white bg-[#f0f0f0]"><svg class="h-3.5 w-2" viewBox="0 0 8 14"><path fill="#a0a0a0" d="M8 0v14L0 7z"/></svg></button>
        <div class="flex-1 bg-[#f8f8f8]"></div>
        <button aria-label="Scroll values right" class="flex w-[34px] items-center justify-center border-2 border-b-[#808080] border-l-white border-r-[#808080] border-t-white bg-[#f0f0f0]"><svg class="h-3.5 w-2" viewBox="0 0 8 14"><path fill="#a0a0a0" d="M0 0v14l8-7z"/></svg></button>
      </div>
    </section>
    <div class="w-1.5 shrink-0 border-l-2 border-r-2 border-l-[#a0a0a0] border-r-white"></div>

    <section class="flex min-w-0 flex-1 flex-col">
      <div class="h-9 shrink-0 bg-black"></div>
      <div class="h-1.5 shrink-0 border-b-2 border-t-2 border-b-white border-t-[#a0a0a0]"></div>
      <div class="min-h-0 flex-1 bg-black"><svg id="wave" class="block h-full w-full" shape-rendering="crispEdges"></svg></div>
      <div class="h-1.5 shrink-0 border-b-2 border-t-2 border-b-white border-t-[#a0a0a0]"></div>
      <div class="h-[78px] shrink-0 bg-black"><svg id="ruler" class="block h-full w-full" shape-rendering="crispEdges"></svg></div>
      <div class="h-1.5 shrink-0 border-b-2 border-t-2 border-b-white border-t-[#a0a0a0]"></div>
      <div class="flex h-[38px] shrink-0 border-b-2 border-t-2 border-[#808080]">
        <div class="flex flex-1 border-2 border-b-white border-l-[#a0a0a0] border-r-white border-t-[#a0a0a0] bg-[#c6c6c6] pl-1 pr-0.5">
          <button aria-label="Scroll wave left" class="flex w-[26px] items-center justify-center border-2 border-b-4 border-r-4 border-b-[#909090] border-l-white border-r-[#909090] border-t-white bg-[#f0f0f0]"><svg class="h-3.5 w-2" viewBox="0 0 8 14"><path d="M8 0v14L0 7z"/></svg></button>
          <div class="flex-[1356]"></div>
          <div class="w-5 border-2 border-b-[#909090] border-l-4 border-l-white border-r-[#909090] border-t-white bg-[#f0f0f0]"></div>
          <div class="flex-[292]"></div>
          <div class="w-0.5 bg-[#ffd400]"></div>
          <div class="flex-[240]"></div>
          <button aria-label="Scroll wave right" class="flex w-[28px] items-center justify-center border-2 border-b-4 border-r-4 border-b-[#909090] border-l-white border-r-[#909090] border-t-white bg-[#f0f0f0]"><svg class="h-3.5 w-2" viewBox="0 0 8 14"><path d="M0 0v14l8-7z"/></svg></button>
        </div>
      </div>
    </section>
    <div class="w-1.5 shrink-0 border-l-2 border-r-2 border-l-[#a0a0a0] border-r-white"></div>

    <section class="flex w-[34px] flex-col">
      <div class="h-9 shrink-0 bg-[#808080]"></div>
      <div class="h-1.5 shrink-0 border-b-2 border-t-2 border-b-white border-t-[#a0a0a0]"></div>
      <div class="flex min-h-0 flex-1 flex-col border-2 border-[#a0a0a0] border-r-white">
        <button aria-label="Scroll up" class="flex h-8 items-center justify-center border-2 border-b-4 border-r-4 border-b-[#909090] border-l-white border-r-[#909090] border-t-white"><svg class="h-2 w-3" viewBox="0 0 12 8"><path d="M5 0h2v3h3v3h2v2H0V6h2V3h3z"/></svg></button>
        <div class="flex flex-1 flex-col border-2 border-b-4 border-r-4 border-b-[#909090] border-l-white border-r-[#909090] border-t-white pt-[118px]"><div class="h-10 bg-white"></div></div>
        <button aria-label="Scroll down" class="flex h-8 items-center justify-center border-2 border-b-4 border-r-4 border-b-[#909090] border-l-white border-r-[#909090] border-t-white"><svg class="h-2 w-4" viewBox="0 0 16 8"><path d="M0 0h16L8 8z"/></svg></button>
      </div>
      <div class="h-1.5 shrink-0 border-b-2 border-t-2 border-b-white border-t-[#a0a0a0]"></div>
      <div class="h-[78px] shrink-0 bg-[#808080]"></div>
      <div class="h-1.5 shrink-0 border-b-2 border-t-2 border-b-white border-t-[#a0a0a0]"></div>
      <div class="h-[38px] shrink-0 bg-[#808080]"></div>
    </section>
  </main>

  <!-- Find bar -->
  <form class="flex h-[58px] shrink-0 items-center border-b-2 border-l-4 border-b-white border-l-white pl-1 pr-4">
    <button type="button" aria-label="Close find" class="flex h-[26px] w-7 items-center justify-center border-2 border-b-[#696969] border-l-white border-r-[#696969] border-t-white"><svg class="size-3.5" viewBox="0 0 14 14"><path stroke="#000" stroke-width="2" d="M0 0l14 14M14 0L0 14"/></svg></button>
    <label for="find" class="ml-0.5 w-[60px]">Find:</label>
    <div class="flex h-10 flex-1 items-center border-l-2 border-t-2 border-[#a0a0a0] bg-white pl-1.5">
      <svg class="h-8 w-9" viewBox="0 0 18 16"><path fill="#5a6878" d="M3 0h3v3h2V0h3v3l2 3v7H9V8H5v5H1V6l2-3z"/><path stroke="#202830" d="M3.500 0v3M8.500 0v3M1.500 7v6M12.500 7v6M5.500 8v5M9.500 8v5"/><path stroke="#a8b4c4" d="M3.500 8v3M11 8v3"/><path d="M10.500 13.500h6l-3 2.500z"/></svg>
      <input id="find" type="text" class="h-full min-w-0 flex-1 pl-2 outline-none">
    </div>
    <button type="button" aria-label="Go" class="ml-1 flex size-10 items-center justify-center border-2 border-b-[#696969] border-l-white border-r-[#696969] border-t-white"><svg class="size-8" viewBox="0 0 16 16"><circle cx="8" cy="8" r="7" fill="none" stroke="#8ab0e0" stroke-dasharray="1 1"/><circle cx="8" cy="8" r="5" fill="#e4ecf8" stroke="#ccd" stroke-dasharray="1 1"/><path fill="none" stroke="#2858b8" d="M7 5.500L9.500 8 7 10.500"/></svg></button>
    <button type="button" aria-label="Search down" class="ml-3.5 flex size-10 items-center justify-center border-2 border-b-[#696969] border-l-white border-r-[#696969] border-t-white"><svg class="size-8" viewBox="0 0 16 16"><path fill="#6cc060" stroke="#3a8a38" d="M6.500 1.500h3v10h2L8 15l-3.500-3.500h2z"/></svg></button>
    <button type="button" aria-label="Clear results" class="ml-1 flex size-10 items-center justify-center border-2 border-b-[#696969] border-l-white border-r-[#696969] border-t-white"><svg class="size-8" viewBox="0 0 16 16"><path fill="#fff" stroke="#000" stroke-dasharray="1 1" d="M2.500.5h8l3 3v12h-11z"/><path stroke="#f02020" d="M5 2.500h2M7 2l-1 3-1 2M9 9l4 5M12 9l-5 5"/><path stroke="#aaa" stroke-dasharray="1 1" d="M4 9.500h3M4 11.500h3"/></svg></button>
    <i class="ml-3.5 h-8 w-0.5 bg-[repeating-linear-gradient(#000_0_2px,transparent_2px_4px)]"></i>
    <button type="button" class="ml-3.5 flex items-center gap-4">Search For<svg class="h-2 w-4" viewBox="0 0 16 8"><path d="M0 0h16L8 8z"/></svg></button>
    <i class="ml-5 h-8 w-0.5 bg-[repeating-linear-gradient(#000_0_2px,transparent_2px_4px)]"></i>
    <input id="whole" type="checkbox" class="ml-8 size-6 appearance-none border-2 border-b-white border-l-[#808080] border-r-white border-t-[#808080] bg-white">
    <label for="whole" class="ml-3 w-[30px] font-['Liberation_Mono',monospace] text-[22px] font-bold"><svg class="h-[26px] w-[30px]" viewBox="0 0 30 26"><path fill="none" stroke="#8b1010" stroke-width="2" d="M7 2H4v8l-3 3 3 3v8h3M23 2h3v8l3 3-3 3v8h-3"/><text x="8" y="19" font-size="22">a</text></svg></label>
    <label for="wrap" class="ml-6 flex items-center gap-3">
      <span class="grid"><input id="wrap" type="checkbox" checked class="col-start-1 row-start-1 size-6 appearance-none border-2 border-b-white border-l-[#808080] border-r-white border-t-[#808080] bg-white"><svg class="col-start-1 row-start-1 m-1 size-4" viewBox="0 0 16 16"><path fill="none" stroke="#000" stroke-width="4" d="M2 6l4 5 8-9"/></svg></span>
      <svg class="size-8" viewBox="0 0 16 16"><path fill="#cfe2fb" stroke="#8aa8d8" d="M.5 4.500h15v8H.5z"/><path fill="#1058d8" d="M3 4h2v8h4v3H3zM10 1h2v4h2l-3 4-3-4h2z"/></svg>
    </label>
  </form>

  <!-- Status -->
  <footer class="flex h-10 shrink-0 items-end">
    <div class="flex h-[38px] w-[338px] items-center border-l-2 border-r-2 border-t-2 border-[#a0a0a0] border-r-white pl-[13px]">141900 ns to 142901 ns</div>
    <div class="ml-0.5 flex h-[38px] flex-1 items-center border-l-2 border-r-2 border-t-2 border-[#a0a0a0] border-r-white pl-3">/seqmealy/Resetn</div>
    <svg class="ml-3 h-5 w-5" viewBox="0 0 10 10"><path stroke="#696969" stroke-width=".8" d="M0 10L10 0M3.500 10L10 3.500M7 10l3-3"/></svg>
  </footer>
</div>
</div>
</div>

<!-- Battery widget at the screen edge -->
<div class="absolute right-0 top-[488px] flex h-[102px] w-4 flex-col justify-end rounded-full border-4 border-[#6a6a6a] bg-[#b4b4b4]"><div class="m-px h-[34px] rounded-full bg-[#22b860]"></div></div>

<!-- Taskbar -->
<div class="flex h-[82px] shrink-0 items-stretch border-t-2 border-white bg-[linear-gradient(90deg,#21352d_0%,#21352d_10%,#33403f_32%,#1f3036_40%,#2f3f43_48%,#43464a_55%,#38302c_60%,#3e352f_66%,#46423f_72%,#36453f_79%,#2b3f2c_84%,#26362f_89%,#2f3e40_94%,#1b2c30_100%)] text-white">
  <button class="flex w-24 items-center justify-center" aria-label="Start"><svg class="size-8" viewBox="0 0 32 32" fill="#fff"><path d="M0 5l13-2v12H0zM15 2.700L32 0v15H15zM0 17h13v12L0 27zM15 17h17v15l-17-2.700z"/></svg></button>
  <label class="flex w-[688px] items-center gap-6 border-2 border-[#c0c0c0] bg-[#f1f1f1] pl-[22px]">
    <svg class="size-8" viewBox="0 0 32 32" fill="none" stroke="#111" stroke-width="2"><circle cx="21" cy="11" r="10"/><path d="M14 18L1 31"/></svg>
    <input type="search" placeholder="搜索" aria-label="搜索" class="min-w-0 flex-1 text-[32px] leading-10 outline-none placeholder:text-[#333]">
  </label>
  <button class="flex w-24 items-center justify-center" aria-label="Cortana"><svg class="size-8" viewBox="0 0 32 32"><circle cx="16" cy="16" r="14" fill="none" stroke="#fff" stroke-width="4"/></svg></button>
  <button class="flex w-24 items-center justify-center" aria-label="Task view"><svg class="size-8" viewBox="0 0 32 32" fill="none" stroke="#fff" stroke-width="2"><path d="M1 1v5h20V1M1 31v-5h20v5M1 10h20v12H1zM29 1v5M29 17v14"/><path fill="#fff" d="M27 10h4v4h-4z"/></svg></button>
  <div class="my-auto ml-3 h-14 w-2 border-x-2 border-[#4c5a5a]"></div>
  <button class="ml-[30px] flex w-20 flex-col items-center" aria-label="Notes">
    <svg class="my-auto size-12" viewBox="0 0 48 48"><circle cx="24" cy="24" r="24" fill="#26d0a4"/><path fill="#fff" d="M12 10h24v28H12z"/><path stroke="#26b090" stroke-width="2" d="M15 15h18M15 20h18M15 25h18M15 30h14M15 35h12"/><path stroke="#9eeedb" stroke-width="4" d="M32 31l6 12"/></svg>
    <span class="h-1 w-full bg-[#b5b2af]"></span></button>
  <button class="ml-[18px] flex w-20 flex-col items-center" aria-label="File Explorer">
    <svg class="my-auto size-12" viewBox="0 0 48 48"><path fill="#d89a10" d="M3 7h17l3 4-3 4H3z"/><path fill="#ffd05c" d="M3 14h18l3-4h21v31H3z"/><path fill="#3a90dc" d="M10 42V25h28v17h-8V32H18v10z"/></svg>
    <span class="flex h-1 w-full bg-[#8c8a88]"><i class="w-[62px] bg-[#b5b2af]"></i></span></button>
  <button class="ml-[18px] flex w-20 flex-col items-center" aria-label="Notepad">
    <svg class="my-auto size-12" viewBox="0 0 48 48"><path fill="#a07840" d="M40 7l4 1-1 32-8 4z"/><path fill="#e4ecee" d="M16 5l26 3-6 38-32-12z"/><path fill="#7fc4d4" d="M18 8l22 3-10 30L2 34z"/><path fill="#2f7480" d="M18 8L2 34l9 2z"/><path stroke="#555" stroke-width="3" stroke-dasharray="1 1" d="M18 5l24 3"/></svg>
    <span class="flex h-1 w-full bg-[#8c8a88]"><i class="w-[62px] bg-[#b5b2af]"></i></span></button>
  <button class="ml-[18px] flex w-20 flex-col items-center" aria-label="UC Browser">
    <svg class="my-auto size-12" viewBox="0 0 48 48"><defs><linearGradient id="uc" x1="1" x2="0" y2="1"><stop stop-color="#ffd200"/><stop offset=".5" stop-color="#ff8c10"/><stop offset="1" stop-color="#ff4c18"/></linearGradient></defs><rect width="48" height="48" rx="9" fill="url(#uc)"/><path fill="#fff" d="M23 5C13 4 6 10 6 18c0 6 6 9 6 15 0 6 4 9 9 10h14c6-3 7-9 3-14-3-3-6-3-6-5h8l2-4-6-4-3-4-2 5c-5 2-9 5-12 5-4 0-5-4-2-7s8-5 6-10z"/><circle cx="21" cy="35" r="6" fill="none" stroke="#ff6a18" stroke-width="2.500"/><circle cx="21" cy="35" r="2" fill="#ff6a18"/><path fill="none" stroke="#ff7a18" stroke-width="2" d="M14 27c8-4 18 0 18 10l-2 6"/></svg>
    <span class="h-1 w-full bg-[#b5b2af]"></span></button>
  <button class="ml-2.5 flex w-24 flex-col items-center border-r-8 border-white/10 bg-white/20" aria-label="ModelSim">
    <svg class="my-auto ml-2 size-12" viewBox="0 0 48 48"><path fill="#0000f8" stroke="#fff" stroke-width="2" d="M1 1h46v9H1z"/><path stroke="#fff" stroke-width="2" d="M3 17h12l9 12 9-12h12v6h-2v18h2v6H31v-6h3V31l-7 10h-6l-7-10v10h3v6H3v-6h2V23H3z"/></svg>
    <span class="h-1 w-full bg-[#b5b2af]"></span></button>

  <div class="ml-auto flex items-center">
    <div class="flex items-center"><div class="flex h-[44px] w-[80px] items-center border-4 border-white bg-[linear-gradient(90deg,#159a48_58%,#222c2a_58%)] pl-2 text-2xl">60%</div><i class="h-6 w-1.5 bg-white"></i></div>
    <svg class="ml-3 h-4 w-[26px]" viewBox="0 0 26 16"><path fill="none" stroke="#fff" stroke-width="2" d="M1 15L13 2l12 13"/></svg>
    <svg class="ml-[22px] h-[30px] w-[26px]" viewBox="0 0 26 30"><path fill="#000" d="M13 0c6 0 8 4 8 10l4 8v4l-3-1c-1 4-3 7-9 7s-8-3-9-7l-3 1v-4l4-8C5 4 7 0 13 0z"/><ellipse cx="13" cy="21" rx="6" ry="7" fill="#fff"/><path fill="#e82020" d="M5 12c5 3 11 3 16 0v4c-5 2-8 2-10 2v5H7v-6l-2-1z"/><circle cx="10.500" cy="6" r="2" fill="#fff"/><circle cx="15.500" cy="6" r="2" fill="#fff"/><path fill="#f8a818" d="M8 9.500h10l-5 3zM4 27h7v3H3zM15 27h7l1 3h-8z"/></svg>
    <svg class="ml-[22px] h-5 w-[30px]" viewBox="0 0 30 20"><path fill="none" stroke="#fff" stroke-width="2" d="M1 1h25v18H1z"/><path fill="#fff" d="M4 4h10v12H4zM27 6h3v8h-3z"/></svg>
    <svg class="ml-5 size-[26px]" viewBox="0 0 26 26" fill="none" stroke="#fff" stroke-width="2"><path d="M2 25C2 12 12 2 25 2M8 25C8 15 15 8 25 8M14 25c0-6 5-11 11-11"/><circle cx="22" cy="22" r="2.500" fill="#fff"/></svg>
    <svg class="ml-4 h-[26px] w-[34px]" viewBox="0 0 34 26" fill="none" stroke="#fff" stroke-width="2"><path d="M1 9h4l7-7v22l-7-7H1zM16 9c2 2 2 6 0 8M20 5c5 4 5 12 0 16"/><path stroke="#889490" d="M25 1c7 6 7 18 0 24"/></svg>
    <span class="ml-4 text-[28px] font-medium leading-10">英</span>
    <div class="ml-5 w-[116px] text-center text-2xl leading-[37px]"><div>16:58</div><div>2021/5/21</div></div>
    <svg class="ml-12 h-[56px] w-[42px]" viewBox="0 0 42 56"><path fill="none" stroke="#fff" stroke-width="2" d="M36 50h-16C8 50 1 42 1 32S9 13 20 13s18 8 18 18c0 6-3 10-3 13z"/><ellipse cx="12" cy="27" rx="2.500" ry="5" fill="#fff"/><ellipse cx="24" cy="27" rx="2.500" ry="5" fill="#fff"/><circle cx="35" cy="11" r="7" fill="#f83838"/></svg>
    <button aria-label="Notifications, 1 new" class="ml-12"><svg class="h-[60px] w-[50px]" viewBox="0 0 50 60"><path fill="#fff" d="M0 12h33v28H17l-7 8v-8H0z"/><path stroke="#2c3a3a" stroke-width="2.500" d="M6 20h21M6 26h21M6 32h14"/><circle cx="31" cy="43" r="15" fill="#3c4444" stroke="#a0a4a4" stroke-width="2"/><text x="24" y="52" fill="#fff" font-size="24" font-weight="700">1</text></svg></button>
    <i class="ml-6 mr-2 h-20 w-px bg-[#707878]"></i>
  </div>
</div>

<script>
const icon = n => `<svg class="size-8 shrink-0" shape-rendering="crispEdges"><use href="#i-${n}"/></svg>`;
const down = '<svg class="h-1.5 w-2.5" viewBox="0 0 10 6"><path d="M0 0h10L5 6z"/></svg>';
const tool = n => `<button class="shrink-0" aria-label="${n}">${icon(n)}</button>`;
const drop = n => `<button class="flex w-[50px] shrink-0 items-center justify-between" aria-label="${n}">${icon(n)}${down}</button>`;
const key = n => `<button class="flex size-10 shrink-0 items-center justify-center border-2 border-b-[#696969] border-l-white border-r-[#696969] border-t-white" aria-label="${n}">${icon(n)}</button>`;
const sunk = n => `<button class="flex size-10 shrink-0 items-center justify-center border-2 border-b-[#e3e3e3] border-l-[#a0a0a0] border-r-[#e3e3e3] border-t-[#a0a0a0] bg-white" aria-label="${n}">${icon(n)}</button>`;
const prof = l => `<button class="grid size-10 shrink-0 place-items-center border-2 border-b-[#696969] border-l-white border-r-[#696969] border-t-white" aria-label="Profile ${l}"><svg class="size-8 overflow-visible" viewBox="0 0 32 32"><use href="#i-prof" x="4" y="4" width="30" height="30"/><text x="0" y="17" font-size="22" font-weight="900">${l}</text></svg></button>`;
const sep = '<i class="mx-1 h-8 w-0.5 shrink-0 bg-[repeating-linear-gradient(#000_0_2px,transparent_2px_4px)]"></i>';
const bar = (items, top = 'pt-2.5', end = '') => `<div role="toolbar" class="flex h-16 shrink-0 border-2 border-b-[#696969] border-l-white border-r-[#696969] border-t-white pl-0.5 pr-3.5 ${end}">
  <div class="mr-5 mt-0.5 h-14 w-1.5 border-2 border-b-[#696969] border-l-white border-r-[#696969] border-t-white"></div>
  <div class="flex ${top}"><div class="flex h-min items-center gap-3">${items.join('')}</div></div></div>`;

document.getElementById('bars1').innerHTML =
  bar([drop('new'), ...['open','save','refresh','print'].map(tool), sep, ...['cut','copy','paste','undo','redo'].map(tool), sep, drop('add'), tool('find'), tool('tree')]) +
  bar(['stack','help','comp','sim','docx'].map(tool), 'pt-2.5', 'mr-1') +
  bar([key('link'), drop('goto'), ...['up','left','right'].map(tool), sep, tool('doc-up'),
    `<div class="flex w-[154px] gap-1 pl-0.5"><input aria-label="Run length" value="100000 n" class="h-[38px] w-[118px] border-2 border-b-[#e3e3e3] border-l-[#a0a0a0] border-r-[#e3e3e3] border-t-[#a0a0a0] bg-white font-['Liberation_Mono',monospace] text-[23px]"><div class="flex w-[26px] flex-col"><button aria-label="Increase" class="grid flex-1 place-items-center border-2 border-b-[#696969] border-l-white border-r-[#696969] border-t-white"><svg class="h-2.5 w-4" viewBox="0 0 16 10"><path d="M8 0l8 10H0z"/></svg></button><button aria-label="Decrease" class="grid flex-1 place-items-center border-2 border-b-[#696969] border-l-white border-r-[#696969] border-t-white"><svg class="h-2.5 w-4" viewBox="0 0 16 10"><path d="M0 0h16L8 10z"/></svg></button></div></div>`,
    ...['doc-dn','doc-dia','doc-dn2','docx','stop'].map(tool), sep, prof('P'), prof('m'), tool('hand')]) +
  bar([...['into','over','out'].map(tool), sep, drop('into2'), drop('over2'), tool('out2')]) +
  bar([drop('bm-add'), drop('bm-del'), tool('bm-edit'),
    `<button aria-label="Save bookmarks" class="-mx-1.5 flex h-10 w-[62px] items-center justify-between border-2 border-b-[#696969] border-l-white border-r-[#696969] border-t-white px-1">${icon('bm-save')}${down}</button>`, tool('bm-go')], 'pt-1.5');

document.getElementById('bars2').innerHTML =
  bar([sunk('arrow'), ...['zoomsel','pan','two','edit'].map(key), sep, tool('light')]) +
  bar(['cur-add','cur-del','e1','e2','e3','e4','e5','e6'].map(tool)) +
  bar([drop('join'), drop('split'), tool('net'), sep,
    `<label for="search" class="-mt-1.5 ml-1 w-[74px]">Search:</label>`,
    `<div class="flex gap-1"><input id="search" type="text" class="h-[38px] w-[232px] border-2 border-b-[#e3e3e3] border-l-[#a0a0a0] border-r-[#e3e3e3] border-t-[#a0a0a0] bg-white"><button aria-label="Search history" class="grid h-9 w-[34px] place-items-center border-2 border-b-[#696969] border-l-white border-r-[#696969] border-t-white"><svg class="mt-1.5 h-3.5 w-7" viewBox="0 0 28 14"><path d="M0 0h28L14 14z"/></svg></button></div>`,
    `<div class="-ml-0.5 flex gap-2">${tool('fprev')}${tool('fnext')}</div>`, `<div class="ml-1.5 mr-1">${tool('fopt')}</div>`]) +
  bar(['zin','zout','zfull','zcur','z2cur','zarea'].map(tool)) +
  bar([sunk('w1'), key('w2'), key('w3'), sep, ...['w4','w5','w6','w7'].map(tool)]);

// Signal list
const signals = [['/seqmealy/Clock',"1'h1",'gem-in'],['/seqmealy/Resetn',"1'h0",'gem-in'],['/seqmealy/w',"1'h1",'gem-in'],['/seqmealy/z',"1'h1",'gem-out'],['/seqmealy/y',"2'h1",'gem'],['/seqmealy/Y',"2'h1",'gem']];
const plus = '<button class="grid size-5 place-items-center rounded-sm bg-[#f4f6fa]" aria-label="Expand"><svg class="size-3" viewBox="0 0 12 12"><path stroke="#000" stroke-width="2" d="M1 6h10M6 1v10"/></svg></button><i class="h-0.5 w-2.5 bg-[#d0d0d0]"></i>';
document.getElementById('names').innerHTML = signals.map(([n, , g], i) =>
  `<li class="flex h-[34px] items-center ${i === 3 ? 'border-t-2 border-[#808080] bg-white text-black' : ''}"><span class="flex w-10 items-center justify-end pl-2.5">${i > 3 ? plus : ''}</span><svg class="h-[30px] w-[30px]"><use href="#i-${g}"/></svg><span class="ml-2.5 pb-0.5">${n}</span></li>`).join('') +
  '<li class="flex h-1 items-center pl-1 pr-2"><svg class="h-4 w-1.5 shrink-0" viewBox="0 0 6 16"><path fill="none" stroke="#000" stroke-width="2" d="M1 1v14l4-7z"/></svg><i class="h-0.5 flex-1 bg-black"></i></li>';
document.getElementById('values').innerHTML = signals.map(([, v], i) =>
  `<li class="flex h-[34px] items-center pb-0.5 pl-1 ${i === 3 ? 'border-t-2 border-[#808080] bg-white text-black' : ''}">${v}</li>`).join('') +
  '<li class="flex h-1 items-center pl-1 pr-2"><i class="h-0.5 flex-1 bg-black"></i></li>';

// Waveforms: t counts ns from 141900
const END = 1001;
const X = t => 6 + 2 * Math.floor(t * 1.96 / 2);
let grid = '';
for (let t = 50; t < 1000; t += 50) grid += `M${X(t) + 1} 0V4000`;
grid += `M${X(END) + 1} 0V4000`;
const digital = (y, first, toggles, edge) => {
  let level = first, d = edge ? `M7 ${y + 25}V${y + 1}` : `M6 ${y + 1}`;
  for (const t of toggles) { d += `H${X(t) + 1}V${level ? y + 25 : y + 1}`; level = !level; }
  return d + `H${X(END) + 1}`;
};
const steps = (from, ...ds) => { const r = []; for (let t = from, i = 0; t < END - 1; t += ds[i++ % ds.length]) r.push(t); return r; };
let green = digital(8, true, steps(10, 10), true) + digital(42, true, steps(25, 25), true) + digital(76, true, steps(10, 30)) + digital(110, true, steps(40, 60));
green += `M${X(END) + 1} 8v128`;
let pale = '', digits = '';
const bus = (y, from, step, label) => {
  let x = 6, v = label;
  for (let t = from; ; t += step) {
    const last = t >= END - 1;
    const e = last ? X(END) : X(t);
    pale += `M${x} ${y + 1}H${e - 2}M${x} ${y + 25}H${e - 2}M${e - 1} ${y + 2}v6M${e + 1} ${y + 8}v10M${e - 1} ${y + 18}v6`;
    if (!last) pale += `M${e + 3} ${y + 2}v6M${e + 3} ${y + 18}v6`;
    if (v !== '') digits += `<text x="${x + (x === 6 ? 10 : 8)}" y="${y + 21}">${v}</text>`;
    v = v === '' ? '0' : v === '0' ? '1' : '0';
    if (last) break;
    x = e + 2;
  }
};
bus(144, 10, 22, '');
bus(178, 32, 44, '1');
document.getElementById('wave').innerHTML =
  `<g fill="none" stroke-width="2"><path stroke="#808080" d="${grid}"/><path stroke="#008000" d="${green}"/><path stroke="#b0ffb0" d="${pale}"/></g><g fill="#fff" font-size="21">${digits}</g>`;

let ticks = '', labels = '';
for (let t = 20; t <= 1000; t += 20) ticks += `M${X(t) + 1} ${t % 100 ? 6 : 0}V14`;
for (let t = 100; t < 1000; t += 200) labels += `<text x="${X(t)}" y="40">${141900 + t} ns</text>`;
document.getElementById('ruler').innerHTML =
  `<path stroke="#008000" stroke-width="2" d="${ticks}"/><path stroke="#808080" stroke-width="2" d="M6 45H${X(END) + 2}"/><g fill="#008000" font-size="20" text-anchor="middle">${labels}</g>`;
</script>
</body>
</html>
